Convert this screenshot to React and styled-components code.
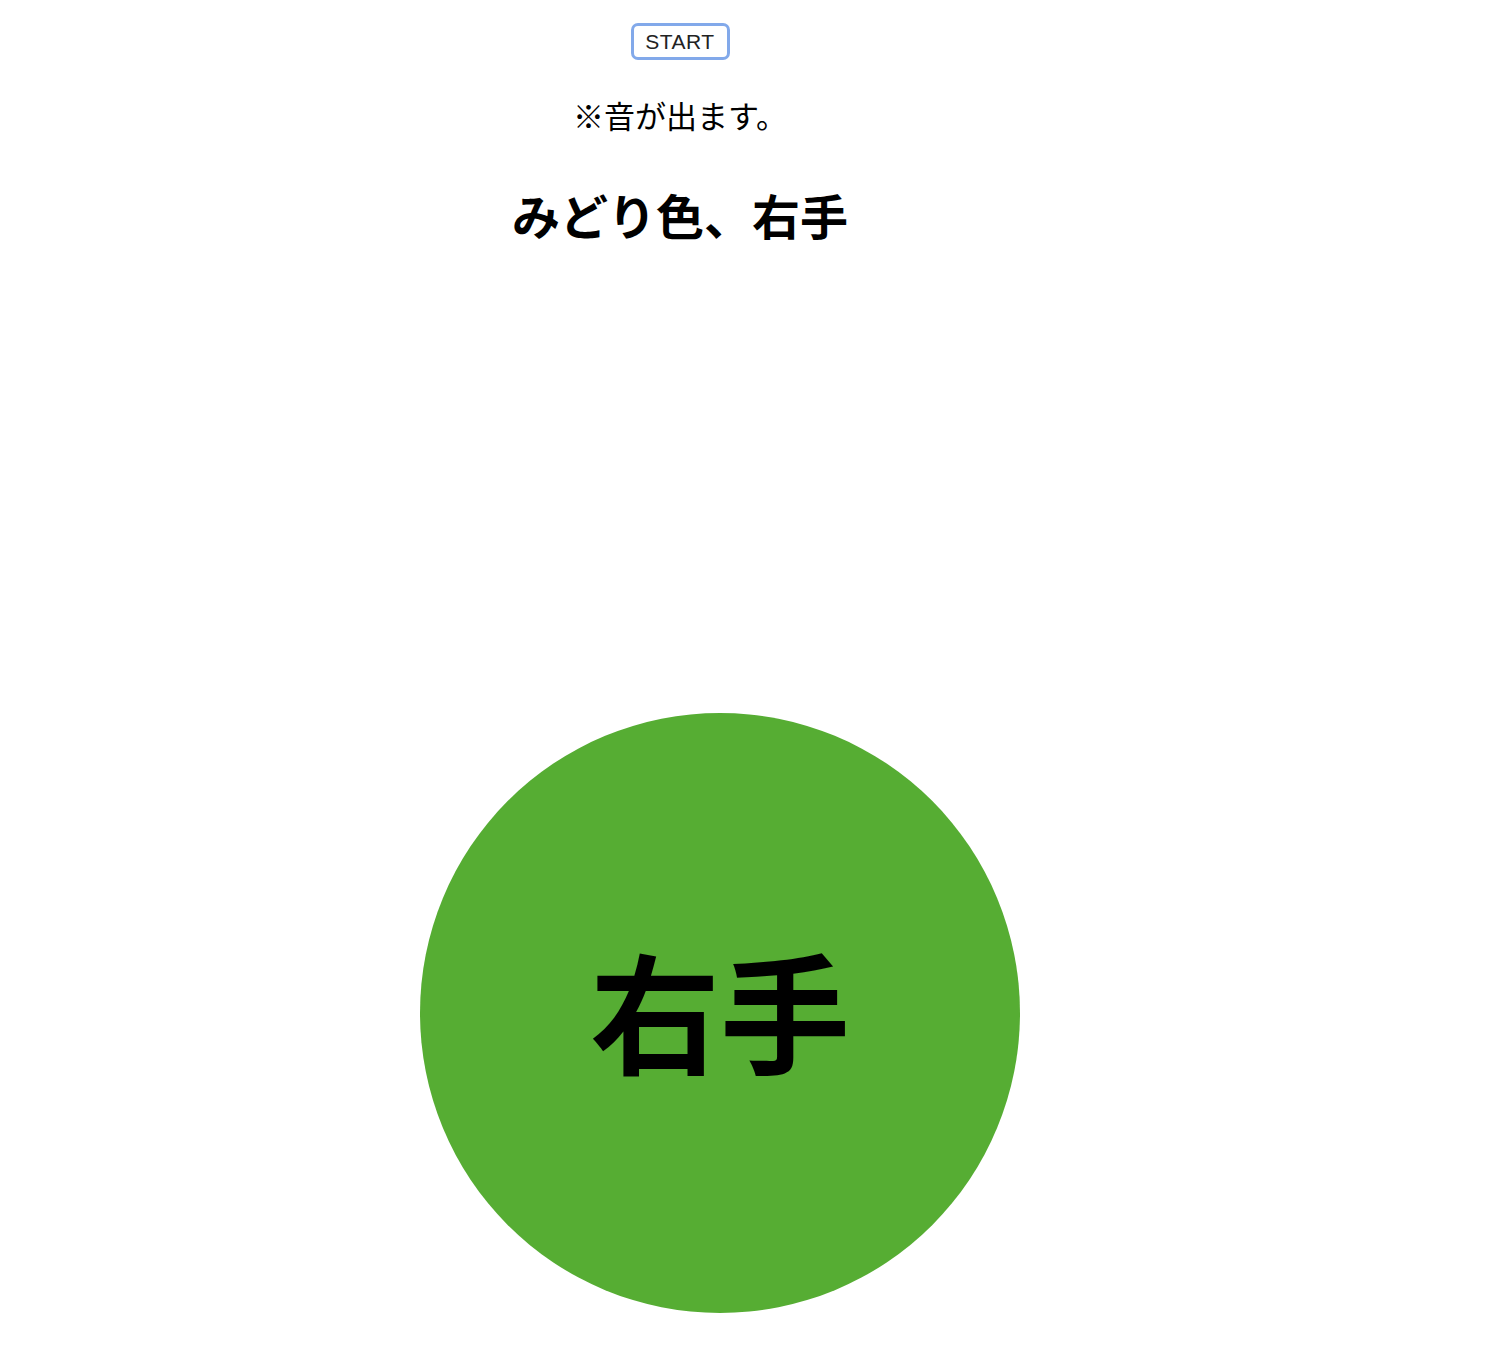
import React from 'react';
import styled, { createGlobalStyle } from 'styled-components';

const GlobalStyle = createGlobalStyle`
  body {
    margin: 0;
    background: #fff;
    font-family: "Noto Sans CJK JP", "Noto Sans", sans-serif;
    color: #000;
  }
`;

const Page = styled.div`
  padding-left: 8px;
  width: 1344px;
  display: flex;
  flex-direction: column;
  align-items: center;
  text-align: center;
`;

const StartButton = styled.button`
  margin-top: 23px;
  width: 99px;
  height: 37px;
  padding: 0;
  border: 3px solid #82a9ea;
  border-radius: 7px;
  background: #fff;
  color: #222;
  font-family: "Liberation Sans", "Noto Sans", sans-serif;
  font-size: 21px;
  letter-spacing: 0.5px;
  cursor: pointer;
`;

const Note = styled.p`
  margin: 35px 0 0;
  font-size: 31px;
  line-height: 40px;
`;

const Heading = styled.h1`
  margin: 49px 0 0;
  font-size: 48px;
  line-height: 60px;
  font-weight: 700;
`;

const Circle = styled.div`
  align-self: flex-start;
  margin: 469px 0 0 412px;
  width: 600px;
  height: 600px;
  box-sizing: border-box;
  padding-bottom: 12px;
  border-radius: 50%;
  background: ${p => p.$color};
  display: flex;
  align-items: center;
  justify-content: center;
  font-size: 130px;
  font-weight: 700;
  line-height: 1;
`;

export default function App() {
  return (
    <>
      <GlobalStyle />
      <Page>
        <StartButton type="button">START</StartButton>
        <Note>※音が出ます。</Note>
        <Heading>みどり色、右手</Heading>
        <Circle $color="#56ad33">右手</Circle>
      </Page>
    </>
  );
}
